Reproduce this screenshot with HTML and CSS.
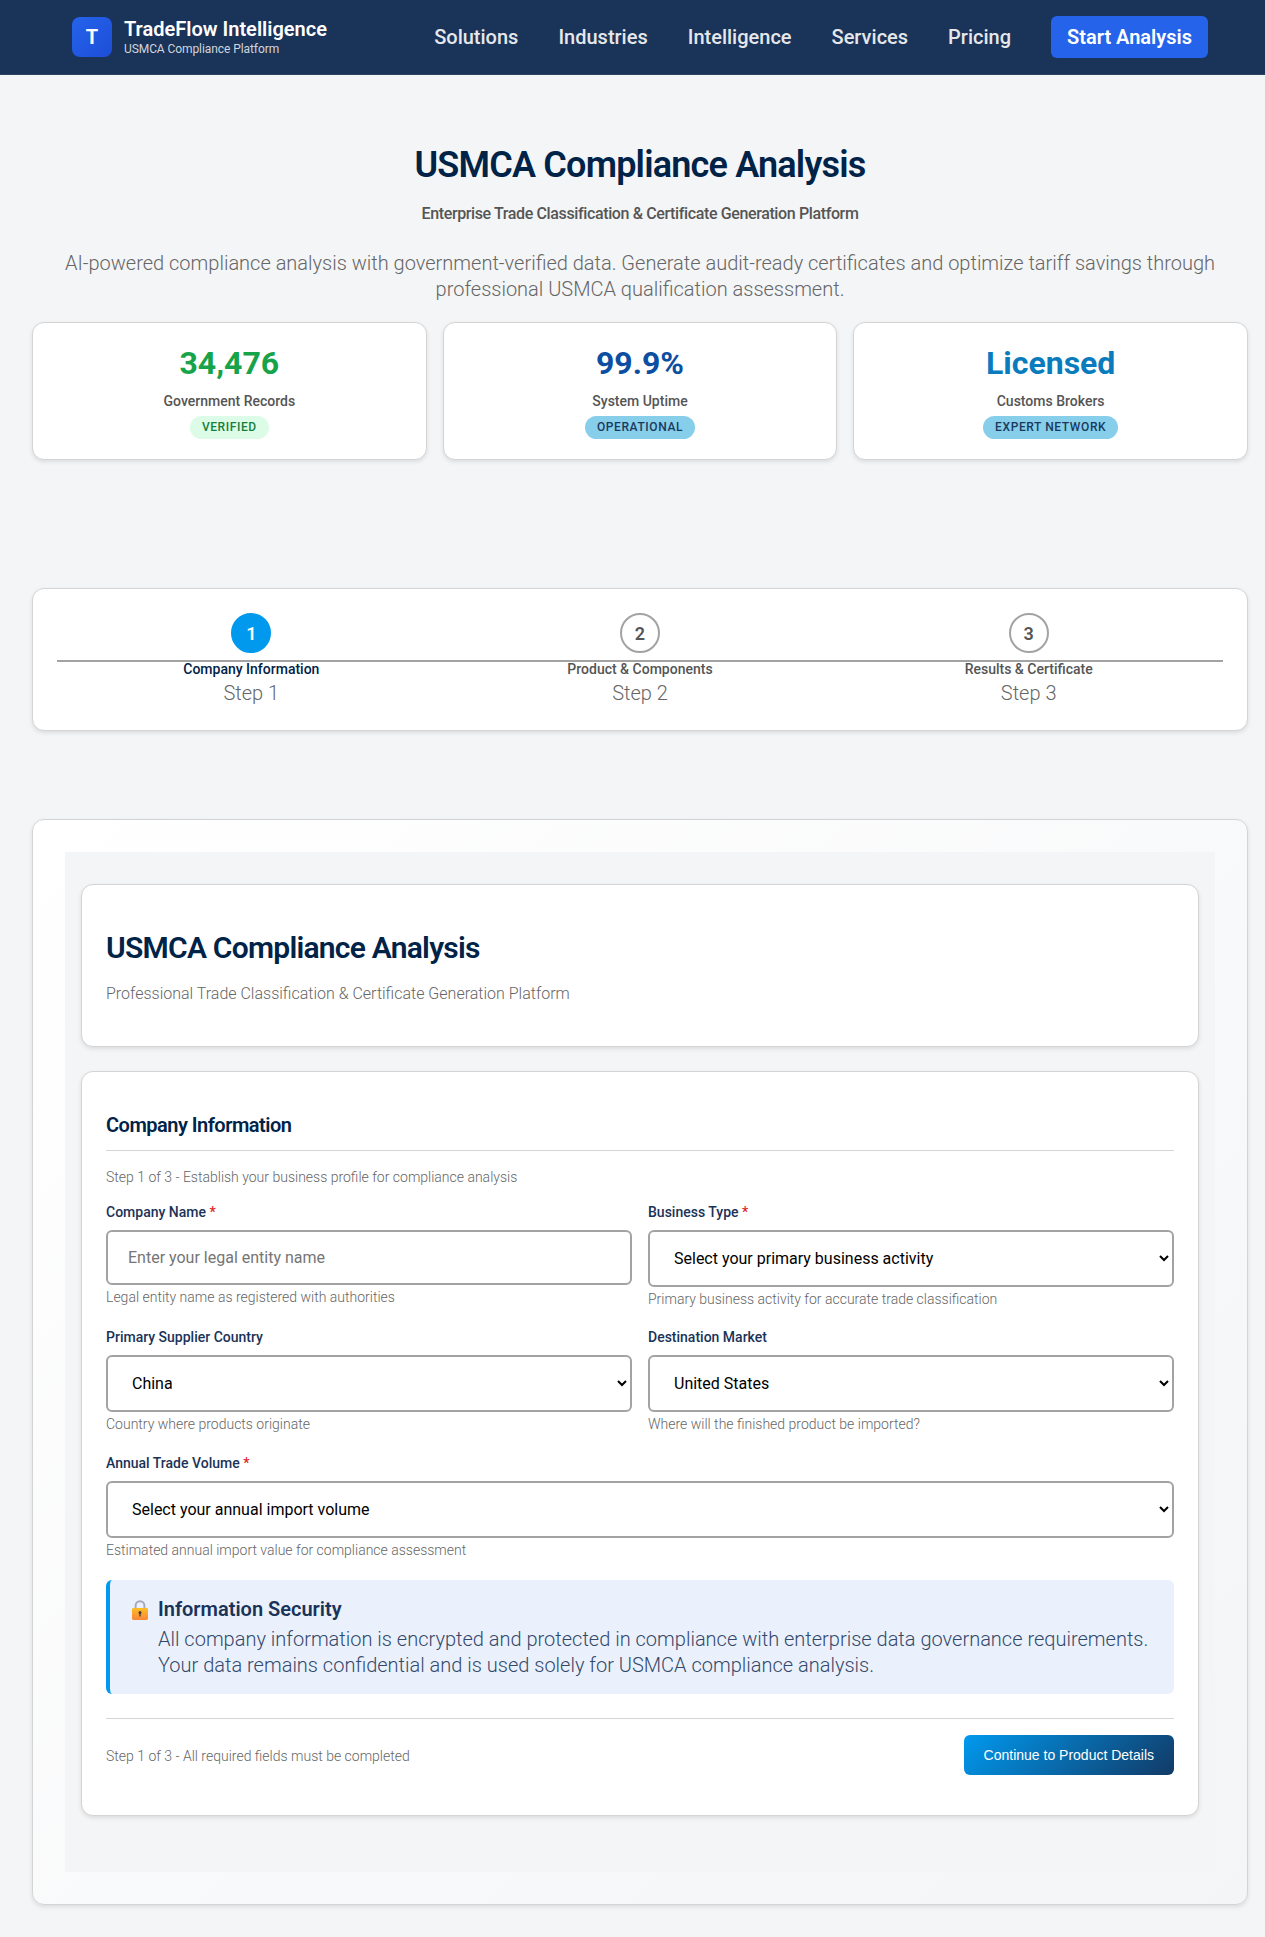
FILE: index.html
```html
<!DOCTYPE html>
<html lang="en">
<head>
<meta charset="utf-8">
<title>USMCA Compliance Analysis</title>
<link rel="stylesheet" href="styles.css">
</head>
<body>
<header class="nav">
  <div class="brand">
    <div class="brand-mark">T</div>
    <div class="brand-text">
      <div class="brand-name">TradeFlow Intelligence</div>
      <div class="brand-sub">USMCA Compliance Platform</div>
    </div>
  </div>
  <nav class="nav-links">
    <a class="nav-link">Solutions</a>
    <a class="nav-link">Industries</a>
    <a class="nav-link">Intelligence</a>
    <a class="nav-link">Services</a>
    <a class="nav-link">Pricing</a>
    <a class="nav-cta">Start Analysis</a>
  </nav>
</header>
<main class="page">
  <section class="hero">
    <h1 class="hero-title">USMCA Compliance Analysis</h1>
    <p class="hero-sub">Enterprise Trade Classification &amp; Certificate Generation Platform</p>
    <p class="hero-desc">AI-powered compliance analysis with government-verified data. Generate audit-ready certificates and optimize tariff savings through professional USMCA qualification assessment.</p>
  </section>
  <section class="stats">
    <div class="card stat">
      <div class="stat-value green">34,476</div>
      <div class="stat-label">Government Records</div>
      <span class="badge badge-green">VERIFIED</span>
    </div>
    <div class="card stat">
      <div class="stat-value navy">99.9%</div>
      <div class="stat-label">System Uptime</div>
      <span class="badge badge-blue">OPERATIONAL</span>
    </div>
    <div class="card stat">
      <div class="stat-value sky">Licensed</div>
      <div class="stat-label">Customs Brokers</div>
      <span class="badge badge-blue">EXPERT NETWORK</span>
    </div>
  </section>
  <section class="card stepper">
    <div class="steps">
      <div class="step active">
        <div class="step-circle">1</div>
        <div class="step-name">Company Information</div>
        <div class="step-num">Step 1</div>
      </div>
      <div class="step">
        <div class="step-circle">2</div>
        <div class="step-name">Product &amp; Components</div>
        <div class="step-num">Step 2</div>
      </div>
      <div class="step">
        <div class="step-circle">3</div>
        <div class="step-name">Results &amp; Certificate</div>
        <div class="step-num">Step 3</div>
      </div>
    </div>
  </section>
  <section class="card workspace">
    <div class="workspace-inner">
      <div class="card panel-head">
        <h2 class="panel-title">USMCA Compliance Analysis</h2>
        <p class="panel-sub">Professional Trade Classification &amp; Certificate Generation Platform</p>
      </div>
      <form class="card panel-form">
        <h3 class="form-title">Company Information</h3>
        <p class="form-intro">Step 1 of 3 - Establish your business profile for compliance analysis</p>
        <div class="form-grid">
          <div class="field">
            <label class="field-label">Company Name <span class="req">*</span></label>
            <input class="control" type="text" placeholder="Enter your legal entity name">
            <div class="help">Legal entity name as registered with authorities</div>
          </div>
          <div class="field">
            <label class="field-label">Business Type <span class="req">*</span></label>
            <select class="control"><option>Select your primary business activity</option></select>
            <div class="help">Primary business activity for accurate trade classification</div>
          </div>
          <div class="field">
            <label class="field-label">Primary Supplier Country</label>
            <select class="control"><option>China</option></select>
            <div class="help">Country where products originate</div>
          </div>
          <div class="field">
            <label class="field-label">Destination Market</label>
            <select class="control"><option>United States</option></select>
            <div class="help">Where will the finished product be imported?</div>
          </div>
          <div class="field wide">
            <label class="field-label">Annual Trade Volume <span class="req">*</span></label>
            <select class="control"><option>Select your annual import volume</option></select>
            <div class="help">Estimated annual import value for compliance assessment</div>
          </div>
        </div>
        <div class="notice">
          <svg class="lock" viewBox="0 0 16 20" width="16" height="20" aria-hidden="true">
            <defs>
              <linearGradient id="lockBody" x1="0" y1="0" x2="0" y2="1">
                <stop offset="0" stop-color="#fbbf24"/>
                <stop offset="1" stop-color="#f9853a"/>
              </linearGradient>
            </defs>
            <path d="M3.6 9V5.6a4.4 4.4 0 0 1 8.8 0V9" fill="none" stroke="#a8a6bc" stroke-width="1.9"/>
            <rect x="0" y="8" width="16" height="12" rx="1.4" fill="url(#lockBody)"/>
            <circle cx="8" cy="12.6" r="1.5" fill="#4a3a3a"/>
            <rect x="7.3" y="13" width="1.4" height="3.4" fill="#4a3a3a"/>
          </svg>
          <div class="notice-body">
            <div class="notice-title">Information Security</div>
            <div class="notice-text">All company information is encrypted and protected in compliance with enterprise data governance requirements. Your data remains confidential and is used solely for USMCA compliance analysis.</div>
          </div>
        </div>
        <div class="form-foot">
          <span class="foot-note">Step 1 of 3 - All required fields must be completed</span>
          <button class="next-btn" type="button">Continue to Product Details</button>
        </div>
      </form>
    </div>
  </section>
</main>
</body>
</html>
```

FILE: styles.css
```css
* { box-sizing: border-box; }
html, body { margin: 0; padding: 0; }
body {
  background: #f4f5f7;
  font-family: Roboto, "Liberation Sans", sans-serif;
  color: #333;
}
h1, h2, h3, p { margin: 0; }

.nav {
  height: 75px;
  background: #1a3358;
  border-bottom: 1px solid #2a4466;
  display: flex;
  align-items: center;
  justify-content: space-between;
  padding: 0 57px 0 72px;
}
.brand { display: flex; align-items: center; gap: 12px; }
.brand-mark {
  width: 40px;
  height: 40px;
  border-radius: 8px;
  background: linear-gradient(135deg, #2563eb, #1d4ed8);
  color: #fff;
  font-size: 20px;
  font-weight: 700;
  display: flex;
  align-items: center;
  justify-content: center;
}
.brand-name { color: #fff; font-size: 20px; font-weight: 600; line-height: 24px; }
.brand-sub { color: #d1d5db; font-size: 12px; line-height: 15px; margin-top: 1px; letter-spacing: -0.08px; }
.nav-links { display: flex; align-items: center; gap: 40px; }
.nav-link { color: #e5e7eb; font-size: 20px; font-weight: 500; }
.nav-cta {
  background: #2563eb;
  color: #fff;
  font-size: 20px;
  font-weight: 600;
  height: 42px;
  line-height: 42px;
  padding: 0 16px;
  border-radius: 6px;
}

.page { padding: 0 17px 32px 32px; }

.hero { text-align: center; padding-top: 68px; }
.hero-title { color: #002347; font-size: 36px; font-weight: 600; line-height: 44px; letter-spacing: -0.8px; }
.hero-sub { color: #555; font-size: 16px; font-weight: 500; line-height: 24px; margin-top: 15px; letter-spacing: -0.375px; }
.hero-desc { color: #666; font-size: 20px; font-weight: 300; line-height: 26px; margin-top: 24px; }

.card {
  background: #fff;
  border: 1px solid #d4d4d4;
  border-radius: 12px;
  box-shadow: 0 2px 4px rgba(0, 0, 0, 0.1);
}

.stats {
  display: grid;
  grid-template-columns: repeat(3, 1fr);
  gap: 16px;
  margin-top: 20px;
}
.stat { height: 138px; padding-top: 20px; text-align: center; }
.stat-value { font-size: 32px; font-weight: 700; line-height: 40px; }
.green { color: #16a34a; }
.navy { color: #0b4ea2; }
.sky { color: #0a7bbd; }
.stat-label { color: #555; font-size: 14px; font-weight: 500; line-height: 20px; margin-top: 8px; margin-bottom: 5px; }
.badge {
  display: inline-block;
  font-size: 12px;
  font-weight: 500;
  letter-spacing: 0.05em;
  line-height: 23px;
  padding: 0 12px;
  border-radius: 12px;
}
.badge-green { background: #dcfce7; color: #15803d; }
.badge-blue { background: #87ceeb; color: #1a3a5c; }

.stepper { margin-top: 128px; height: 143px; padding: 24px; }
.steps { position: relative; display: grid; grid-template-columns: repeat(3, 1fr); }
.steps::before {
  content: "";
  position: absolute;
  left: 0;
  right: 0;
  top: 47px;
  height: 2px;
  background: #a3a3a3;
}
.step { position: relative; display: flex; flex-direction: column; align-items: center; }
.step-circle {
  width: 40px;
  height: 40px;
  border-radius: 50%;
  border: 2px solid #a3a3a3;
  background: #fff;
  color: #555;
  font-size: 18px;
  font-weight: 600;
  display: flex;
  align-items: center;
  justify-content: center;
}
.step.active .step-circle { background: #0099ee; border-color: #0099ee; color: #fff; }
.step-name { color: #555; font-size: 14px; font-weight: 500; line-height: 18px; margin-top: 7px; }
.step.active .step-name { color: #002347; }
.step-num { color: #666; font-size: 20px; font-weight: 300; line-height: 26px; margin-top: 2px; }

.workspace {
  margin-top: 88px;
  padding: 32px;
  background: linear-gradient(135deg, #ffffff, #f4f5f7);
}
.workspace-inner { background: #f4f5f7; padding: 32px 16px; }

.panel-head { height: 163px; padding: 43px 24px 0; margin-bottom: 24px; }
.panel-title { color: #002347; font-size: 30px; font-weight: 600; line-height: 40px; letter-spacing: -0.025em; }
.panel-sub { color: #666; font-size: 16px; font-weight: 300; line-height: 24px; margin-top: 14px; }

.panel-form { padding: 39px 24px 40px; margin-bottom: 24px; }
.form-title {
  color: #002347;
  font-size: 20px;
  font-weight: 600;
  line-height: 28px;
  padding-bottom: 11px;
  border-bottom: 1px solid #d4d4d4;
  letter-spacing: -0.5px;
}
.form-intro { color: #666; font-size: 14px; font-weight: 300; line-height: 20px; margin-top: 16px; margin-bottom: 15px; }
.form-grid { display: grid; grid-template-columns: 1fr 1fr; column-gap: 16px; row-gap: 20.25px; }
.field { min-width: 0; }
.wide { grid-column: 1 / -1; }
.field-label { display: block; color: #1a3358; font-size: 14px; font-weight: 500; line-height: 20px; margin-bottom: 8px; }
.req { color: #dc2626; }
.control {
  display: block;
  width: 100%;
  padding: 16px 20px;
  border: 2px solid #a3a3a3;
  border-radius: 6px;
  background: #fff;
  color: #000;
  font-family: Roboto, sans-serif;
  font-size: 16px;
}
.control::placeholder { color: #757575; }
.help { color: #666; font-size: 14px; font-weight: 300; line-height: 16px; margin-top: 4px; }

.notice {
  display: flex;
  gap: 10px;
  align-items: flex-start;
  margin-top: 22px;
  padding: 16px 24px 16px 22px;
  background: #ebf1fc;
  border-left: 4px solid #0099ee;
  border-radius: 6px;
}
.lock { flex: none; margin-top: 4px; }
.notice-title { color: #1a3358; font-size: 20px; font-weight: 600; line-height: 26px; margin-bottom: 4px; }
.notice-text { color: #33496b; font-size: 20px; font-weight: 300; line-height: 26px; }

.form-foot {
  display: flex;
  align-items: center;
  justify-content: space-between;
  margin-top: 24px;
  padding-top: 16px;
  border-top: 1px solid #d4d4d4;
}
.foot-note { color: #666; font-size: 14px; font-weight: 300; padding-top: 2px; }
.next-btn {
  height: 40px;
  padding: 0 20px;
  border: 0;
  border-radius: 6px;
  background: linear-gradient(135deg, #0099ee, #123a66);
  color: #fff;
  font-family: "Liberation Sans", Arial, sans-serif;
  font-size: 14px;
}
```
